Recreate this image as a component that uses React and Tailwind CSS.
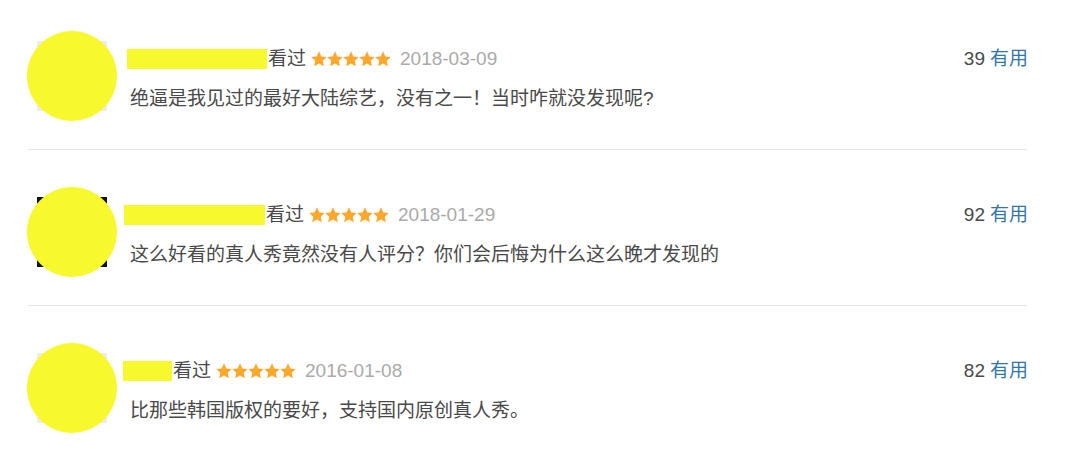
import React from 'react';

const reviews = [
  { nameW: 140, nameShift: 3, avatar: 'bg-[#ececec]', date: '2018-03-09', text: '绝逼是我见过的最好大陆综艺，没有之一！当时咋就没发现呢?', votes: 39 },
  { nameW: 141, nameShift: 0, avatar: 'bg-[#111111]', date: '2018-01-29', text: '这么好看的真人秀竟然没有人评分？你们会后悔为什么这么晚才发现的', votes: 92 },
  { nameW: 49, nameShift: -1, avatar: 'bg-[#ececec]', date: '2016-01-08', text: '比那些韩国版权的要好，支持国内原创真人秀。', votes: 82 },
];

function Stars() {
  return (
    <span className="flex items-center">
      {[0, 1, 2, 3, 4].map((i) => (
        <svg key={i} width="16" height="16" viewBox="0 0 24 24">
          <path
            d="M12 0.5l3.5 7.6 8.2.9-6.1 5.6 1.7 8.1L12 18.6l-7.3 4.1 1.7-8.1L.3 9l8.2-.9z"
            fill="#ffa72a"
          />
        </svg>
      ))}
    </span>
  );
}

function Review({ r }) {
  return (
    <div className="flex items-start h-[156px] pt-[37px] border-b border-[#e6e6e6] last:border-b-0">
      {/* avatar, covered by a yellow disc */}
      <div className="relative w-[90px] h-[90px] -ml-[1px] shrink-0">
        <div className={`absolute left-[10px] top-[10px] w-[70px] h-[70px] ${r.avatar}`} />
        <div className="absolute inset-0 rounded-full bg-[#f8f82e]" />
      </div>

      <div className="flex-1 ml-[7px] mt-[16px]">
        <div className="flex items-center h-[24px]">
          <span className="h-[20px] bg-[#f8f82e]" style={{ width: r.nameW, marginLeft: r.nameShift }} />
          <span className="ml-[1px] text-[#494949]">看过</span>
          <span className="ml-[5px]"><Stars /></span>
          <span className="ml-[9px] text-[#aaaaaa]">{r.date}</span>
        </div>
        <p className="mt-[16px] pl-[6px] leading-[24px] text-[#494949]">{r.text}</p>
      </div>

      <div className="mt-[16px] h-[24px] flex items-center -mr-[1px]">
        <span className="text-[#494949]">{r.votes}</span>
        <span className="ml-[5px] text-[#3377aa]">有用</span>
      </div>
    </div>
  );
}

export default function App() {
  return (
    <div
      className="w-[1080px] h-[459px] bg-white overflow-hidden text-[19px] leading-[24px]"
      style={{ fontFamily: '"Liberation Sans", "Noto Sans CJK SC", sans-serif' }}
    >
      <div className="ml-[28px] w-[999px] -mt-[6px]">
        {reviews.map((r) => (
          <Review key={r.date} r={r} />
        ))}
      </div>
    </div>
  );
}
